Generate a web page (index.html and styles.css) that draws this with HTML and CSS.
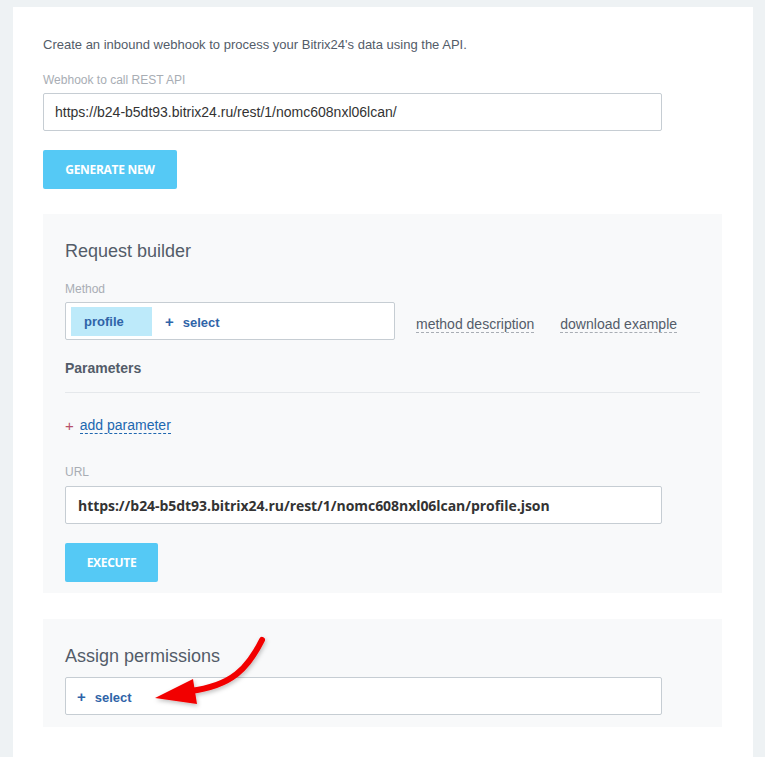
FILE: index.html
```html
<!DOCTYPE html>
<html>
<head>
  <title>Inbound webhook</title>
  <link rel="stylesheet" href="styles.css">
</head>
<body>
  <div class="card">
    <p class="intro">Create an inbound webhook to process your Bitrix24's data using the API.</p>
    <div class="label">Webhook to call REST API</div>
    <div class="field">https://b24-b5dt93.bitrix24.ru/rest/1/nomc608nxl06lcan/</div>
    <button class="btn btn-generate">GENERATE NEW</button>

    <div class="panel builder">
      <h2 class="panel-title">Request builder</h2>
      <div class="label label-method">Method</div>
      <div class="method-row">
        <div class="method-box">
          <span class="chip">profile</span>
          <span class="add-select"><span class="plus">+</span>select</span>
        </div>
        <a class="dashed">method description</a>
        <a class="dashed">download example</a>
      </div>
      <div class="params-title">Parameters</div>
      <div class="divider"></div>
      <div class="add-param"><span class="plus-red">+</span><a class="dashed-blue">add parameter</a></div>
      <div class="label label-url">URL</div>
      <div class="field field-url">https://b24-b5dt93.bitrix24.ru/rest/1/nomc608nxl06lcan/profile.json</div>
      <button class="btn btn-execute">EXECUTE</button>
    </div>

    <div class="panel perms">
      <h2 class="panel-title">Assign permissions</h2>
      <div class="field field-select">
        <span class="add-select"><span class="plus">+</span>select</span>
      </div>
    </div>
  </div>

  <svg class="arrow" width="765" height="757" viewBox="0 0 765 757">
    <defs>
      <filter id="shade" x="-20%" y="-20%" width="140%" height="140%">
        <feDropShadow dx="1" dy="2" stdDeviation="2" flood-color="#000" flood-opacity="0.25"/>
      </filter>
    </defs>
    <g filter="url(#shade)">
      <path d="M262,640 C248,668 232,686 190,691" fill="none" stroke="#f20000" stroke-width="6" stroke-linecap="round"/>
      <polygon points="155,698 193,679 197,704" fill="#f20000"/>
    </g>
  </svg>
</body>
</html>
```

FILE: styles.css
```css
body {
  margin: 0;
  padding: 0;
  background: #eef2f4;
  font-family: "Liberation Sans", Arial, sans-serif;
  color: #535c69;
  overflow: hidden;
}
.card {
  position: relative;
  background: #fff;
  margin: 7px 12px 0 13px;
  padding: 30px 31px 40px 30px;
  min-height: 700px;
}
.intro {
  margin: 0 0 20px;
  font-size: 13px;
  line-height: 16px;
}
.label {
  font-size: 12px;
  line-height: 14px;
  color: #a8adb4;
  margin-bottom: 6px;
}
.field {
  box-sizing: border-box;
  width: 619px;
  height: 38px;
  border: 1px solid #c6cdd3;
  border-radius: 2px;
  background: #fff;
  padding: 0 11px;
  display: flex;
  align-items: center;
  font-size: 14px;
  color: #333;
}
.btn {
  display: block;
  border: 0;
  border-radius: 2px;
  background: #55c9f5;
  color: #fff;
  font-family: "Open Sans", sans-serif;
  font-weight: 700;
  font-size: 12px;
  letter-spacing: -0.3px;
  height: 39px;
  padding: 0;
}
.btn-generate {
  margin-top: 19px;
  width: 134px;
}
.panel {
  background: #f8f9fa;
  padding: 26px 22px 11px 22px;
}
.builder {
  margin-top: 25px;
}
.perms {
  margin-top: 26px;
  padding-bottom: 12px;
}
.panel-title {
  margin: 0;
  font-weight: 400;
  font-size: 18px;
  line-height: 22px;
  color: #535c69;
}
.label-method {
  margin-top: 20px;
  margin-bottom: 6px;
}
.method-row {
  display: flex;
  align-items: center;
  white-space: nowrap;
}
.method-box {
  box-sizing: border-box;
  flex-shrink: 0;
  width: 330px;
  height: 38px;
  border: 1px solid #c6cdd3;
  border-radius: 2px;
  background: #fff;
  padding: 4px 5px;
  display: flex;
  align-items: center;
  margin-right: 21px;
}
.chip {
  box-sizing: border-box;
  width: 81px;
  height: 29px;
  background: #bdeafa;
  color: #2f64a8;
  font-weight: 700;
  font-size: 13px;
  display: flex;
  align-items: center;
  padding-left: 13px;
  margin-right: 13px;
}
.add-select {
  color: #2f64a8;
  font-weight: 700;
  font-size: 13px;
}
.add-select .plus {
  font-size: 15px;
  margin-right: 9px;
}
.dashed {
  flex-shrink: 0;
  font-size: 14px;
  color: #535c69;
  border-bottom: 1px dashed #a8adb4;
  line-height: 16px;
  margin-right: 26px;
  margin-top: 7px;
}
.params-title {
  margin-top: 20px;
  font-weight: 700;
  font-size: 14px;
  line-height: 17px;
}
.divider {
  margin-top: 15px;
  height: 1px;
  background: #e5e8eb;
}
.add-param {
  margin-top: 24px;
  font-size: 14px;
  line-height: 17px;
  display: flex;
  align-items: center;
}
.plus-red {
  color: #b7506a;
  margin-right: 6px;
  font-size: 15px;
}
.dashed-blue {
  color: #2067b0;
  border-bottom: 1px dashed #2067b0;
  line-height: 16px;
}
.label-url {
  margin-top: 31px;
  margin-bottom: 7px;
}
.field-url {
  width: 597px;
  padding-left: 12px;
  font-family: "Open Sans", sans-serif;
  font-weight: 700;
  font-size: 14px;
  letter-spacing: -0.05px;
  color: #333;
}
.btn-execute {
  margin-top: 19px;
  width: 93px;
}
.perms .panel-title {
  margin-bottom: 10px;
}
.field-select {
  width: 597px;
  height: 38px;
}
.arrow {
  position: absolute;
  left: 0;
  top: 0;
  pointer-events: none;
}
```
